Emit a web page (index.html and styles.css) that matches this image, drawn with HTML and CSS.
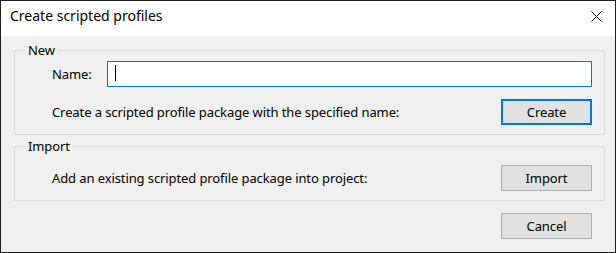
FILE: index.html
```html
<!DOCTYPE html>
<html lang="en">

<head>
  <meta charset="UTF-8" />
  <title>Create scripted profiles</title>
  <link rel="stylesheet" href="styles.css">
</head>

<body>
  <div class="dialog">
    <!-- Title bar -->
    <div class="titlebar">
      <span class="title">Create scripted profiles</span>
      <span class="close">
        <svg width="11" height="11" viewBox="0 0 11 11">
          <path d="M0.5 0.5 L10.5 10.5 M10.5 0.5 L0.5 10.5" stroke="#000" stroke-width="1" fill="none" />
        </svg>
      </span>
    </div>

    <div class="content">
      <!-- New group -->
      <fieldset class="group group-new">
        <legend>New</legend>
        <div class="row">
          <label class="name-label">Name:</label>
          <div class="textbox"><span class="caret"></span></div>
        </div>
        <div class="row row-spaced">
          <span>Create a scripted profile package with the specified name:</span>
          <button class="btn btn-default">Create</button>
        </div>
      </fieldset>

      <!-- Import group -->
      <fieldset class="group group-import">
        <legend>Import</legend>
        <div class="row">
          <span>Add an existing scripted profile package into project:</span>
          <button class="btn">Import</button>
        </div>
      </fieldset>

      <div class="footer">
        <button class="btn">Cancel</button>
      </div>
    </div>
  </div>
</body>

</html>
```

FILE: styles.css
```css
body {
  margin: 0;
  font-family: 'Noto Sans', sans-serif;
  font-size: 13px;
  letter-spacing: -0.1px;
  color: #000;
}

.dialog {
  width: 616px;
  height: 253px;
  box-sizing: border-box;
  border: 1px solid #1f1f1f;
  background: #f0f0f0;
  display: flex;
  flex-direction: column;
}

.titlebar {
  height: 35px;
  background: #fff;
  display: flex;
  justify-content: space-between;
  align-items: flex-start;
  padding: 0 13px 0 9px;
}

.title {
  font-size: 14px;
  letter-spacing: 0;
  line-height: 20px;
  padding-top: 5px;
}

.close {
  margin-top: 10px;
  display: block;
}

.close svg {
  display: block;
}

.content {
  flex: 1;
  display: flex;
  flex-direction: column;
}

.group {
  margin: 0 10px 0 13px;
  border: 1px solid #dcdcdc;
  padding: 3px 12px 9px 11px;
  min-width: 0;
}

.group legend {
  padding: 0 2px;
  line-height: 16px;
}

.group-new {
  margin-top: 6px;
}

.group-import {
  margin-top: 3px;
  padding-top: 11px;
}

.row {
  display: flex;
  align-items: center;
  justify-content: space-between;
  height: 26px;
  padding-left: 26px;
  line-height: 16px;
}

.row-spaced {
  margin-top: 12px;
}

.name-label {
  width: 55px;
}

.textbox {
  width: 485px;
  height: 26px;
  box-sizing: border-box;
  background: #fff;
  border: 1px solid #0078d7;
  padding: 3px 7px;
}

.caret {
  display: block;
  width: 1px;
  height: 16px;
  background: #000;
}

.btn {
  width: 91px;
  height: 26px;
  box-sizing: border-box;
  background: #e1e1e1;
  border: 1px solid #adadad;
  font-family: inherit;
  font-size: 13px;
  letter-spacing: -0.1px;
  color: #000;
  padding: 0;
}

.btn-default {
  border: 2px solid #0078d7;
}

.footer {
  display: flex;
  justify-content: flex-end;
  margin-top: 12px;
  padding-right: 23px;
}
```
